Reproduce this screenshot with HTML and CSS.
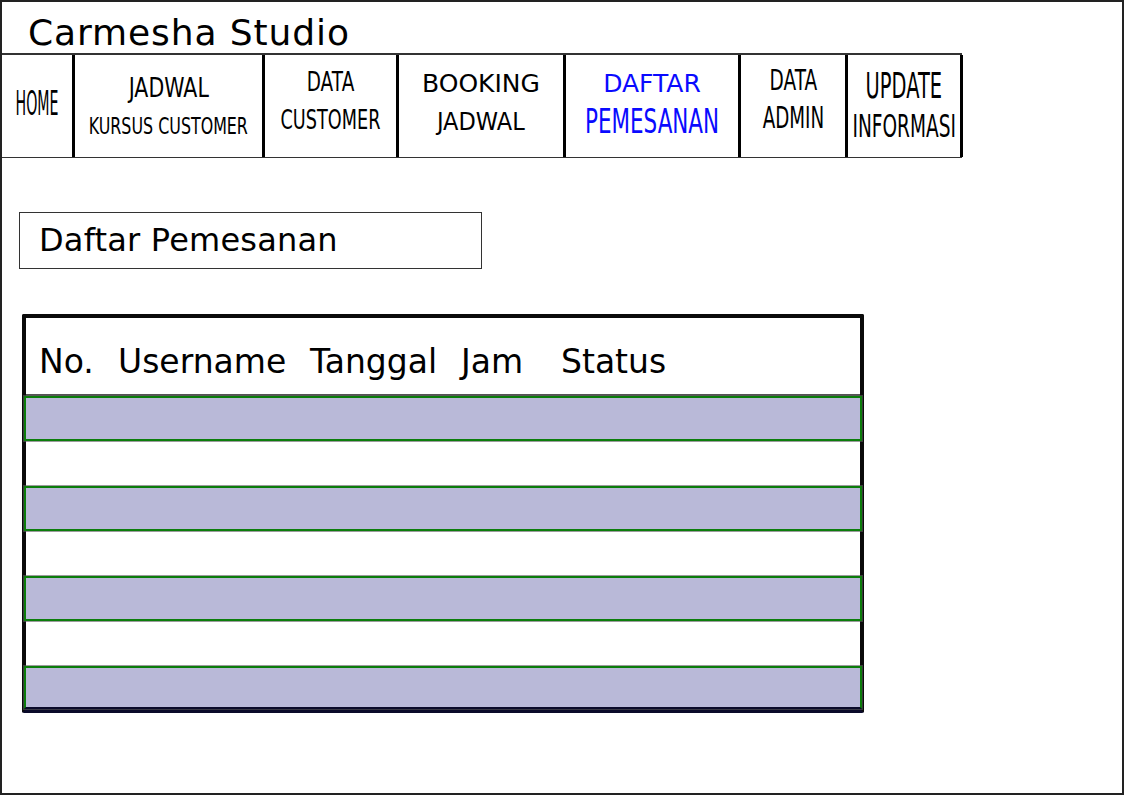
FILE: index.html
```html
<!DOCTYPE html>
<html lang="id">
<head>
<meta charset="utf-8">
<title>Carmesha Studio - Daftar Pemesanan</title>
<link rel="stylesheet" href="styles.css">
</head>
<body>
<div class="frame">
  <header class="brand">Carmesha Studio</header>
  <nav class="nav">
    <div class="nav-item w-home pad-home"><span class="ln cond f33 sx43">HOME</span></div>
    <div class="nav-item w-jadwal pad-jadwal">
      <span class="ln cond f27 sx76">JADWAL</span>
      <span class="ln cond f23 sx69">KURSUS CUSTOMER</span>
    </div>
    <div class="nav-item w-cust pad-cust">
      <span class="ln cond f26 sx71">DATA</span>
      <span class="ln cond f26 sx68">CUSTOMER</span>
    </div>
    <div class="nav-item w-book pad-book">
      <span class="ln reg f25">BOOKING</span>
      <span class="ln reg f25 narrow">JADWAL</span>
    </div>
    <div class="nav-item w-daftar pad-book active">
      <span class="ln reg f25">DAFTAR</span>
      <span class="ln cond f33 sx65">PEMESANAN</span>
    </div>
    <div class="nav-item w-admin pad-admin">
      <span class="ln cond f29 sx64">DATA</span>
      <span class="ln cond f30 sx61">ADMIN</span>
    </div>
    <div class="nav-item w-update pad-update">
      <span class="ln cond f36 sx54 tall">UPDATE</span>
      <span class="ln cond f32 sx58">INFORMASI</span>
    </div>
  </nav>
  <main class="content">
    <div class="page-title">Daftar Pemesanan</div>
    <div class="table">
      <div class="thead">
        <span>No.</span>
        <span>Username</span>
        <span>Tanggal</span>
        <span>Jam</span>
        <span>Status</span>
      </div>
      <div class="row filled"></div>
      <div class="row"></div>
      <div class="row filled"></div>
      <div class="row"></div>
      <div class="row filled"></div>
      <div class="row"></div>
      <div class="row filled last"></div>
    </div>
  </main>
</div>
</body>
</html>
```

FILE: styles.css
```css
* { box-sizing: border-box; }

html, body {
  margin: 0;
  padding: 0;
  background: #ffffff;
}

body {
  font-family: "DejaVu Sans", Verdana, sans-serif;
  color: #000;
}

.frame {
  width: 1124px;
  height: 795px;
  border: 2px solid #222;
  overflow: hidden;
}

.brand {
  height: 51px;
  padding: 10px 0 0 26px;
  font-size: 36px;
  letter-spacing: 0.9px;
  line-height: 41px;
  white-space: nowrap;
}

.nav {
  display: flex;
  width: 960px;
  height: 105px;
  border-top: 2px solid #333;
  border-bottom: 1px solid #333;
}

.nav-item {
  display: flex;
  flex-direction: column;
  align-items: center;
  border-right: 3px solid #000;
  flex: none;
}

.w-home { width: 73px; }
.w-jadwal { width: 190px; }
.w-cust { width: 134px; }
.w-book { width: 167px; }
.w-daftar { width: 175px; }
.w-admin { width: 107px; }
.w-update { width: 115px; }

.pad-home { padding-top: 30px; }
.pad-jadwal { padding-top: 14px; }
.pad-cust { padding-top: 8px; }
.pad-book { padding-top: 10px; }
.pad-admin { padding-top: 6px; }
.pad-update { padding-top: 10px; }

.ln {
  display: block;
  line-height: 38px;
  height: 38px;
  white-space: nowrap;
  transform-origin: center center;
}
.ln.tall { line-height: 42px; height: 42px; }

.cond { font-family: "DejaVu Sans", sans-serif; }
.reg { font-family: "DejaVu Sans", Verdana, sans-serif; }
.narrow { transform: scaleX(0.9); }

.f23 { font-size: 23px; }
.f24 { font-size: 24px; }
.f25 { font-size: 25px; }
.f26 { font-size: 26px; }
.f27 { font-size: 27px; }
.f29 { font-size: 29px; }
.f30 { font-size: 30px; }
.f32 { font-size: 32px; }
.f33 { font-size: 33px; }
.f36 { font-size: 36px; }

.sx43 { transform: scaleX(0.43); }
.sx54 { transform: scaleX(0.54); }
.sx58 { transform: scaleX(0.58); }
.sx61 { transform: scaleX(0.61); }
.sx64 { transform: scaleX(0.64); }
.sx65 { transform: scaleX(0.65); }
.sx68 { transform: scaleX(0.68); }
.sx69 { transform: scaleX(0.69); }
.sx71 { transform: scaleX(0.71); }
.sx76 { transform: scaleX(0.76); }

.active { color: #0a0aff; }

.content {
  padding: 54px 0 0 17px;
}

.page-title {
  width: 463px;
  height: 57px;
  border: 1.5px solid #333;
  padding-left: 19px;
  font-size: 32px;
  letter-spacing: 0.2px;
  line-height: 54px;
}

.table {
  margin: 45px 0 0 3px;
  width: 842px;
  border: 4px solid #0a0a0a;
  border-bottom-color: #0a0a2a;
  border-radius: 2px;
}

.thead {
  display: grid;
  grid-template-columns: 79px 192px 151px 100px 1fr;
  height: 78px;
  padding: 24px 0 0 13px;
  font-size: 33px;
  line-height: 40px;
  border-bottom: 2px solid #555;
}

.row {
  height: 45px;
}

.row.filled {
  background: #b9b9d8;
  border: 2px solid #0b7d0b;
  box-shadow: 0 0 0 1px rgba(90, 90, 90, 0.6);
  margin: 0 -2px;
}

.row.last {
  height: 43px;
  border-bottom-color: #0a0a2a;
}
```
